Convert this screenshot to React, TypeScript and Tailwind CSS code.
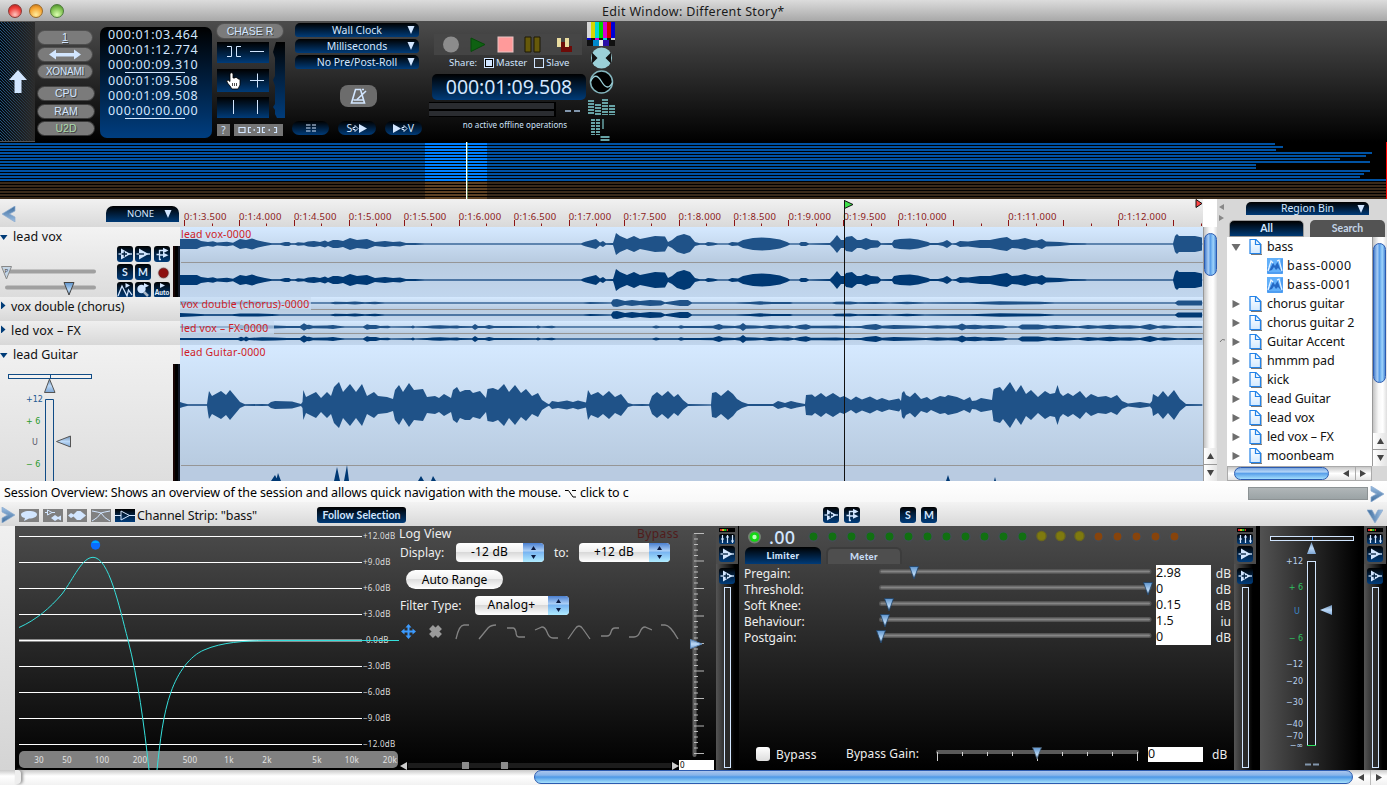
import React from "react";

type Pt = [number, number];

const VOX: Pt[] = [[180,5],[190,5],[197,5],[201,3],[208,2],[213,2.7],[217,1.5],[227,2.3],[233,1.3],[240,5],[246,4],[252,5.5],[258,3.5],[265,2],[272,.7],[280,.7],[285,2],[289,2],[291,.7],[295,.7],[298,1.7],[304,1.3],[308,2.5],[314,3],[320,2],[325,3.5],[328,2],[333,4],[338,4],[343,3],[350,6],[357,4],[367,5],[375,2],[385,3],[393,2],[400,2.5],[406,1],[415,1],[425,.5],[581,.5],[583,1.5],[586,2.5],[596,5],[600,1.5],[603,3],[606,.7],[613,1],[614,4],[616,11],[620,8],[627,5],[634,8],[640,5],[655,8],[665,7.5],[668,2],[672,4],[677,8],[684,10],[690,8],[695,2],[700,.7],[705,.7],[708,2],[713,1.5],[718,.5],[728,.5],[732,2],[738,1.5],[743,4],[753,6],[762,6.5],[770,6],[780,4.5],[787,2],[790,.5],[799,.5],[801,2],[806,2],[809,.5],[830,1],[833,4],[837,9],[841,4],[844,4],[846,7],[852,8],[857,4],[861,4],[866,6],[871,4],[878,3.5],[881,.8],[892,1],[894,4],[900,5],[910,5.5],[918,4.5],[928,2],[930,1],[938,1],[943,2],[947,4],[950,2],[952,.5],[956,1],[960,3],[968,2.5],[980,4],[990,4],[1000,6],[1007,7],[1012,4],[1018,4.5],[1025,6],[1032,4],[1037,3.5],[1042,5],[1046,2.5],[1060,2],[1070,1],[1085,.7],[1087,.5],[1173,.5],[1175,8],[1177,10],[1179,8],[1195,8],[1202,6.5]];

const DOUBLE: Pt[] = [[180,2],[192,1.5],[205,.8],[232,.8],[240,1.5],[258,1.5],[272,1],[280,.6],[330,.6],[335,1.3],[347,1],[355,1.6],[365,.8],[375,1.2],[385,.5],[583,.5],[590,1],[600,.7],[611,.5],[613,3.5],[617,4],[625,2],[632,3],[640,2],[650,3],[661,2.5],[665,.8],[670,1.5],[680,3],[688,3],[692,.5],[735,.5],[750,1],[760,1.7],[772,1],[790,1],[793,.5],[832,.5],[836,1.2],[850,1.5],[858,.8],[875,.9],[890,.6],[907,1.3],[925,.5],[955,.8],[970,.7],[985,1.2],[1000,1.8],[1040,1.2],[1055,.5],[1175,.5],[1178,2.6],[1202,2.4]];

const FX: Pt[] = [[180,1],[215,1],[238,1],[241,2.2],[244,1.2],[246,2.6],[249,1],[262,1.7],[275,1.5],[287,1],[300,1],[304,3.8],[307,2],[309,2.2],[313,1.3],[327,1.6],[333,2],[338,1.2],[345,.6],[363,.6],[367,2.8],[370,2],[376,2],[380,1.1],[388,1.2],[391,.5],[411,.7],[413,1.4],[415,.6],[427,1],[433,1.5],[440,1.7],[450,1.2],[457,1.5],[460,1],[472,.8],[475,3],[478,.9],[485,1],[489,2],[494,1],[536,.8],[538,1.5],[541,.5],[548,1],[552,1.2],[556,.5],[652,.5],[656,1.4],[660,.7],[678,.8],[681,1.7],[684,1],[700,1],[713,1.3],[719,3],[723,1.4],[735,1],[740,1.8],[743,4],[746,1.7],[755,1.4],[762,1],[770,1.9],[780,1.2],[788,1.8],[794,.7],[800,2],[806,2.8],[811,1.2],[820,1.3],[836,1.6],[852,.7],[861,1],[866,2],[876,3],[882,1.2],[894,2],[913,1.4],[926,1],[937,1.7],[948,1.3],[958,1.7],[962,3.5],[966,1.7],[975,2.2],[983,1.4],[991,2],[1003,1.6],[1008,.5],[1018,.6],[1022,2.5],[1038,2.4],[1048,1.2],[1056,2],[1070,1.3],[1078,.7],[1088,2.1],[1098,1.2],[1110,2.2],[1120,1.6],[1130,1.8],[1140,1],[1150,3],[1158,1.1],[1164,1.8],[1178,.8],[1190,1],[1202,.8]];

const GUITAR: Pt[] = [[180,3],[183,2],[188,.7],[207,.7],[208,8],[209,14],[212,9],[221,14],[226,10],[230,15],[235,9],[240,3],[245,.7],[262,1],[268,.7],[271,3],[275,4],[292,3.5],[301,1],[302.5,3],[303.3,15],[306,8],[316,13],[321,7],[327,13],[331,9],[334,18],[339,23],[343,13],[350,21],[356,13],[362,21],[367,9],[374,13],[378,9],[387,8],[393,6],[395,15],[399,20],[403,13],[409,22],[414,15],[423,16],[427,8],[435,9],[439,7],[444,11],[451,7],[453,15],[457,18],[460,13],[465,15],[470,15],[473,12],[480,14],[486,7],[487.5,16],[493,17],[498,15],[504,21],[509,13],[515,20],[521,12],[526,16],[532,9],[538,12],[542,5],[547,1.7],[549,.7],[552,4],[558,3],[567,4.5],[573,3],[578,4.5],[586,2.5],[588,15],[591,10],[598,13],[603,9],[609,14],[615,8],[621,11],[625,6],[628,2],[633,.7],[642,1],[649,.7],[652,9],[657,13],[662,9],[668,14],[674,8],[678,11],[683,5],[688,1],[711,.5],[712,12],[716,13],[721,9],[728,15],[733,11],[737,6],[742,3],[748,1],[773,1],[778,4],[785,2],[791,4],[797,2.5],[805,1],[806,10],[812,10.5],[815,8],[821,12],[826,8],[833,12],[840,7.5],[844,9],[851,5],[856,8.5],[862,5.5],[870,8.5],[877,5],[882,7],[889,4.5],[899,6.5],[901,4],[902,12],[904,14],[906,10],[910,8],[915,12.5],[921,6],[927,8],[931,5],[940,9],[945,8],[948,10],[957,8],[964,5],[970,8],[972,4],[976,4.5],[981,7],[992,5],[993.5,16],[1000,18],[1003,14],[1010,23],[1016,13],[1021,20],[1026,11],[1031,15],[1038,8],[1045,14],[1050,11],[1055,12],[1057.5,20],[1060,12],[1063,9],[1068,12],[1073,9],[1080,14],[1086,7],[1091,11],[1098,8],[1106,9],[1111,7],[1117,10],[1122,4],[1128,1.5],[1140,3],[1150,1.5],[1152,4],[1153,11],[1158,8],[1163,14],[1168,8],[1174,15],[1180,6],[1186,1],[1202,.7]];

const mirror = (pts: Pt[], cy: number) =>
  pts.map(([x, a]) => `${x - 180},${cy - a}`).join(" ") +
  " " +
  [...pts].reverse().map(([x, a]) => `${x - 180},${cy + a}`).join(" ");

/* ---------- shared bits ---------- */

function Defs() {
  return (
    <svg className="absolute h-0 w-0">
      <defs>
        <linearGradient id="thumb" x1="0" y1="0" x2="0" y2="1">
          <stop offset="0" stopColor="#5d93cc" /><stop offset="0.6" stopColor="#b9d8f6" /><stop offset="1" stopColor="#5b7fa8" />
        </linearGradient>
        <linearGradient id="thumbUp" x1="0" y1="0" x2="0" y2="1">
          <stop offset="0" stopColor="#6f90b5" /><stop offset="0.5" stopColor="#bcd9f7" /><stop offset="1" stopColor="#7ea6d4" />
        </linearGradient>
        <linearGradient id="chev" x1="0" y1="0" x2="0" y2="1">
          <stop offset="0" stopColor="#9ec0e4" /><stop offset="1" stopColor="#3d6c9c" />
        </linearGradient>
        <linearGradient id="page" x1="0" y1="0" x2="0" y2="1">
          <stop offset="0" stopColor="#ffffff" /><stop offset="1" stopColor="#d2e9ff" />
        </linearGradient>
        <linearGradient id="btn" x1="0" y1="0" x2="0" y2="1">
          <stop offset="0" stopColor="#000" /><stop offset="0.45" stopColor="#02203f" /><stop offset="1" stopColor="#003c7b" />
        </linearGradient>
      </defs>
    </svg>
  );
}

function Chevron({ dir }: { dir: "left" | "right" | "down" }) {
  const rot = dir === "left" ? "rotate(180 8 8)" : dir === "down" ? "rotate(90 8 8)" : "";
  return (
    <svg width="16" height="16" viewBox="0 0 16 16">
      <path transform={rot} d="M2 0L15 8L2 16V11L7.5 8L2 5Z" fill="url(#chev)" stroke="#8eacd0" strokeWidth="0.7" />
    </svg>
  );
}

type IconKind = "add" | "sub" | "route" | "S" | "M" | "wave" | "zoom" | "auto";
function BlueIcon({ kind }: { kind: IconKind }) {
  return (
    <svg width="16" height="16" viewBox="0 0 16 16">
      <rect width="16" height="16" rx="3" fill="url(#btn)" />
      {kind === "add" && (<g><path d="M1.5 8H15" stroke="#d2e6ff" strokeWidth="1.3" /><path d="M4 2.5L13.5 8L4 13.5Z" fill="#d2e6ff" /><path d="M4.7 8H10M7.3 5.5V10.8" stroke="#00203f" strokeWidth="1.3" /></g>)}
      {kind === "sub" && (<g><path d="M1.5 8H15" stroke="#d2e6ff" strokeWidth="1.3" /><path d="M4 2.5L13.5 8L4 13.5Z" fill="#d2e6ff" /><path d="M4 8H9" stroke="#00203f" strokeWidth="1.3" /></g>)}
      {kind === "route" && (<g stroke="#d2e6ff" fill="none"><path d="M2.5 8.5H6M5.5 14V4.500H10M5.500 9H10M5 13.500H7" strokeWidth="1.3" /><path d="M9 1.8L14.5 4.500L9 7.2ZM9 6.500L14.500 9.200L9 11.800Z" fill="#d2e6ff" stroke="none" /></g>)}
      {kind === "wave" && (<g><path d="M1 14L5 4L10 14L11.5 8L15 13" stroke="#d2e6ff" strokeWidth="1.3" fill="none" /><path d="M8.5 1L13 3.5L8.5 6Z" fill="#d2e6ff" /></g>)}
      {kind === "zoom" && (<g><circle cx="6.5" cy="7" r="4.2" fill="#d2e6ff" /><path d="M9 10L13 14" stroke="#aab8c8" strokeWidth="2.5" /><path d="M9 1L14 3.8L9 6Z" fill="#d2e6ff" /></g>)}
      {kind === "auto" && (<g><path d="M6 1L11 3.500L6 6Z" fill="#d2e6ff" /><text x="8" y="13" textAnchor="middle" className="fill-[#e6f1ff] font-['Lato'] text-[6.5px] font-black">Auto</text></g>)}
      {(kind === "S" || kind === "M") && (<text x="8" y="12" textAnchor="middle" className="fill-[#d2e6ff] font-['Lato'] text-[10.5px] font-bold">{kind}</text>)}
    </svg>
  );
}

function ScrollArrow({ dir }: { dir: "up" | "down" | "left" | "right" }) {
  const d = { up: "M3.5 0L7 6H0Z", down: "M0 0H7L3.5 6Z", left: "M6 0V7L0 3.5Z", right: "M0 0V7L6 3.5Z" }[dir];
  return <svg width="7" height="7"><path d={d} fill="#444" /></svg>;
}

function VScroll({ thumb, className = "" }: { thumb: string; className?: string }) {
  return (
    <div className={"flex flex-col border-l border-[#999] bg-[linear-gradient(90deg,#c4c4c4,#f8f8f8_40%,#fff_70%,#dedede)] " + className}>
      <div className={"mt-[6px] rounded-full border border-[#2c5bb0] bg-[linear-gradient(90deg,#4a82cf,#a8cdf5_30%,#5ba0ea_50%,#9fd4fb_75%,#4d8ad6)] " + thumb} />
      <div className="flex-1" />
      <div className="flex h-[17px] items-center justify-center border-b border-[#999] bg-[linear-gradient(90deg,#fff,#e4e4e4)]"><ScrollArrow dir="up" /></div>
      <div className="flex h-[16px] items-center justify-center bg-[linear-gradient(90deg,#fff,#e4e4e4)]"><ScrollArrow dir="down" /></div>
    </div>
  );
}

/* ---------- top panel ---------- */

function Pill({ children, className = "" }: { children?: React.ReactNode; className?: string }) {
  return (
    <div className={"flex items-center justify-center rounded-full bg-[#7b7b7b] font-['Liberation_Sans'] text-[11px] leading-none text-[#d2e6ff] [text-shadow:1px_1px_0_#444] ring-1 ring-[#5a5a5a]/60 " + className}>
      {children}
    </div>
  );
}

const NAVY = "bg-[linear-gradient(#000,#003b78)]";

function NavyMenu({ label, className = "" }: { label: string; className?: string }) {
  return (
    <div className={`flex items-center rounded-b-[3px] rounded-t-[5px] ${NAVY} text-[10.5px] leading-none text-[#d2e6ff] ${className}`}>
      <span className="flex-1 pl-[12px] text-center">{label}</span>
      <svg width="8" height="8" className="mr-[4px]"><path d="M0.5 0H7.5L4 8Z" fill="#d2e6ff" /></svg>
    </div>
  );
}

const TIMES = ["000:01:03.464", "000:01:12.774", "000:00:09.310", "000:01:09.508", "000:01:09.508", "000:00:00.000"];

function TopPanel() {
  return (
    <div className="flex h-[121px] shrink-0 bg-[linear-gradient(#4c4c4c,#000)]">
      <div className="flex w-[35px] items-center justify-center border-y border-[#555] bg-[linear-gradient(90deg,transparent,#2b2b2b),repeating-linear-gradient(45deg,#245680_0_0.7px,#020a12_0.700px_2.120px)]">
        <svg width="18" height="23"><path d="M9 0L18 10H12.5V23H5.5V10H0Z" fill="#d2e6ff" /></svg>
      </div>
      <div className="ml-[3px] flex w-[57px] flex-col pt-[10px]">
        <Pill className="h-[13px] w-[54px] underline">1</Pill>
        <Pill className="mt-[4px] h-[13px] w-[54px]">
          <svg width="32" height="11"><path d="M0 5.5L7 0.5V4H25V0.5L32 5.5L25 10.5V7.5H7V10.5Z" fill="#d2e6ff" /></svg>
        </Pill>
        <Pill className="mt-[4px] h-[13px] w-[54px] text-[10px]! tracking-[-0.2px]">XONAMI</Pill>
        <Pill className="mt-[9px] h-[13px] w-[56px] text-[10.5px]!">CPU</Pill>
        <Pill className="mt-[5px] h-[13px] w-[56px] text-[10.5px]!">RAM</Pill>
        <Pill className="mt-[4px] h-[13px] w-[56px] text-[10.5px]! text-[#a9d9a9]!">U2D</Pill>
      </div>
      <div className="ml-[5px] mt-[6px] flex h-[111px] w-[112px] flex-col rounded-[7px] bg-[linear-gradient(#000,#003e80)] pl-[8px] pt-px text-[12.5px] tracking-[0.68px] text-[#d2e6ff]">
        {TIMES.map((t, i) => (
          <div key={i} className={"flex h-[15px] shrink-0 items-center leading-none " + (i === 3 ? "mt-px" : "")}>
            {i % 3 === 2 ? (
              <span className="relative">{t}<i className="absolute -bottom-[1px] left-[17px] h-px w-[60px] bg-[#d2e6ff]" /></span>
            ) : t}
          </div>
        ))}
      </div>
      <div className="ml-[5px] mt-[3px] w-[72px]">
        <Pill className="h-[14px] w-[66px] text-[10.5px]!">CHASE R</Pill>
        <div className="flex">
          <div className="w-[52px]">
            <div className={`mt-[4px] flex h-[21px] items-center ${NAVY}`}>
              <svg width="52" height="21" stroke="#d2e6ff" fill="none"><path d="M10 4.5H14.500V14.500H10M24 4.500H19.500V14.500H24M33 9.500H47" /></svg>
            </div>
            <div className={`mt-[6px] h-[23px] ${NAVY}`}>
              <svg width="52" height="24"><path d="M33 11.500H47M40.500 4.500V18.500" stroke="#d2e6ff" /><path d="M13 4.500Q14.500 3 16 4.500V9H18V8.500Q21 8 21 10Q23 9.500 23 11V16L21 20H15L13 17Q10 14 9.500 11.500Q11.500 10.500 13 12.500Z" fill="#fff" stroke="#000" strokeWidth="0.8" /><path d="M15.500 14V17M17.500 14V17M19.500 14V17" stroke="#222" strokeWidth="0.8" /></svg>
            </div>
            <div className={`mt-[5px] h-[21px] ${NAVY}`}>
              <svg width="52" height="21"><path d="M16.500 3V17M40.500 3V17" stroke="#d2e6ff" /></svg>
            </div>
          </div>
          <svg className="ml-[4px] mt-[4px]" width="12" height="76"><path d="M3 0H12V76H4L2 72V68L0 65L2 62V44L0 38L2 34V16L0 10Z" fill="url(#btn)" /></svg>
        </div>
        <div className="mt-[6px] flex h-[12px] gap-[4px] text-[10px] leading-none text-[#d2e6ff]">
          <div className="flex w-[13px] items-center justify-center bg-[#757575]">?</div>
          <div className="flex w-[49px] items-center justify-center bg-[#757575]">
            <svg width="42" height="8" fill="none" stroke="#d2e6ff" strokeWidth="1.2"><path d="M1 1.500H7V6.500H1ZM13 1.500H10.500V6.500H13M19 1.500H21.500V6.500H19M27 1.500H24.500V6.500H27M36 1.500H38.500V6.500H36" /><path d="M15.500 4H17M30.500 4H32" strokeWidth="1.500" /></svg>
          </div>
        </div>
      </div>
      <div className="ml-[2px] mt-[2px] flex w-[132px] flex-col">
        <NavyMenu label="Wall Clock" className="ml-[4px] h-[14px] w-[124px]" />
        <NavyMenu label="Milliseconds" className="ml-[4px] mt-[2px] h-[14px] w-[124px]" />
        <NavyMenu label="No Pre/Post-Roll" className="ml-[4px] mt-[2px] h-[14px] w-[124px]" />
        <div className="ml-[49px] mt-[16px] flex h-[22px] w-[37px] items-center justify-center rounded-[8px] bg-[#6c6c6c]">
          <svg width="18" height="17" fill="none" stroke="#d2e6ff" strokeWidth="1.600"><path d="M5.500 1.500H10.500L14.500 15H1.500ZM3.500 12H13M7 11.500L16 3" /><path d="M12 1.500H14" /></svg>
        </div>
        <div className="ml-px mt-[14px] flex gap-[9px] text-[10.500px] leading-none text-[#d2e6ff]">
          <div className={`flex h-[14px] w-[37px] items-center justify-center rounded-full ${NAVY}`}>
            <svg width="10" height="8" stroke="#d2e6ff" strokeWidth="1.200"><path d="M0 1H4.500M0 4H4.500M0 7H4.500M6 1H10.500M6 4H10.500M6 7H10.500" /></svg>
          </div>
          <div className={`flex h-[14px] w-[38px] items-center justify-center rounded-full ${NAVY}`}>
            S<svg width="15" height="9"><path d="M1 3.500H3V1.500L6 4.500L3 7.500V5.500H1Z" fill="none" stroke="#d2e6ff" /><path d="M7 0L15 4.500L7 9Z" fill="#d2e6ff" /></svg>
          </div>
          <div className={`flex h-[14px] w-[37px] items-center justify-center rounded-full ${NAVY}`}>
            <svg width="15" height="9"><path d="M9 3.500H11V1.500L14 4.500L11 7.500V5.500H9Z" fill="none" stroke="#d2e6ff" /><path d="M0 0L8 4.500L0 9Z" fill="#d2e6ff" /></svg>V
          </div>
        </div>
      </div>
      <div className="ml-[6px] mt-[13px] w-[158px]">
        <svg className="ml-[5px] block" width="148" height="21">
          <rect width="148" height="21" fill="#474747" opacity="0.800" />
          <circle cx="17" cy="10.500" r="8" fill="#8c8c8c" />
          <path d="M37 4L51 10.500L37 17.500Z" fill="#0f6112" stroke="#074a0a" />
          <rect x="64" y="3" width="15" height="15" fill="#ff9a9a" stroke="#e9c4c4" />
          <path d="M91 3H97V18H91ZM100 3H106V18H100Z" fill="#66590a" stroke="#1c1804" />
          <path d="M127 8H134V18H127ZM132 12H138V18H132Z" fill="#6d0b08" />
          <path d="M123 4H127V13H123ZM131 4H135V13H131Z" fill="#e9dca0" />
        </svg>
        <div className="flex h-[16px] items-center pl-[20px] text-[9.500px] leading-none text-[#d2e6ff]">
          Share:
          <i className="ml-[7px] mr-[2px] flex h-[10px] w-[10px] items-center justify-center border border-[#d2e6ff] bg-black"><i className="h-[6px] w-[6px] bg-[#d2e6ff]" /></i>Master
          <i className="ml-[7px] mr-[2px] h-[10px] w-[10px] border border-[#d2e6ff]" />Slave
        </div>
        <div className={`ml-[3px] mt-[3px] flex h-[26px] w-[154px] items-center justify-center rounded-[5px] ${NAVY} text-[19.500px] leading-none tracking-[-0.070px] text-[#d2e6ff]`}>000:01:09.508</div>
        <div className="mt-[2px] flex h-[15px] items-center">
          <div className="flex h-[15px] w-[127px] flex-col gap-[2px] border-y border-black bg-black pr-[2px]"><i className="flex-1 bg-[#2a2c30]" /><i className="flex-1 bg-[#2a2c30]" /></div>
          <i className="ml-[9px] mt-[3px] h-[2px] w-[6px] bg-[#8296ac]" /><i className="ml-[3px] mt-[3px] h-[2px] w-[6px] bg-[#8296ac]" />
        </div>
        <div className="mt-[4px] whitespace-nowrap pl-[14px] text-center text-[8px] leading-none tracking-[0.080px] text-[#cfe3fb]">no active offline operations</div>
      </div>
      <svg className="block" width="30" height="121">
        {["#d6d6d6", "#d6d600", "#00d6d6", "#00d600", "#d600d6", "#d60000", "#0000d6"].map((c, i) => (
          <rect key={c} x={i * 4} y="1" width="4" height="16" fill={c} />
        ))}
        {["#0000d6", "#111", "#d600d6", "#111", "#00d6d6", "#111", "#ccc"].map((c, i) => (
          <rect key={i} x={i * 4} y="17" width="4" height="2" fill={c} />
        ))}
        <path d="M0 19H6V25H0Z M22 19H28V25H22Z" fill="#111" /><path d="M6 19H12V25H6Z" fill="#08c" /><path d="M12 19H16V25H12Z" fill="#eee" /><path d="M16 19H22V25H16Z" fill="#2a10a8" />
        <circle cx="14.500" cy="37" r="10.500" fill="#9bd0d8" /><path d="M5 31.500L10.500 37L5 42.500ZM24 31.500L18.500 37L24 42.500Z" fill="#111" />
        <circle cx="14.500" cy="61" r="11" fill="#000" stroke="#84b5bd" strokeWidth="1.500" /><path d="M3.500 60.500Q8.500 50 14.500 60.500T25.500 61.500" fill="none" stroke="#9bd0d8" strokeWidth="1.300" />
        <path d="M4 79V94M11 83V94M18 78V94M25 84V94" stroke="#67a3a6" strokeWidth="6" strokeDasharray="2 1" />
        <path d="M6 98V114M11 98V114" stroke="#67a3a6" strokeWidth="4" strokeDasharray="2 1" /><path d="M16 98V108" stroke="#67a3a6" strokeWidth="1.500" /><path d="M18 115V120" stroke="#67a3a6" strokeWidth="9" strokeDasharray="2 1" />
      </svg>
    </div>
  );
}

/* ---------- overview ---------- */

const ROW_ENDS = [1275, 1283, 1276, 1372, 1366, 1340, 1370, 1256, 1256, 1370, 1364, 1360, 1386];

function Overview() {
  return (
    <svg className="block shrink-0 bg-black" width="1387" height="57">
      {Array.from({ length: 19 }, (_, i) => {
        const blue = i < 13;
        const end = blue ? ROW_ENDS[i] : 1386;
        return (
          <g key={i}>
            <rect x="0" y={1 + i * 3} width={end} height="2" fill={blue ? "#0052a3" : "#3a2a1a"} />
            <rect x="425" y={1 + i * 3} width="62" height="2" fill={blue ? "#0080ff" : "#5f4224"} />
          </g>
        );
      })}
      <rect x="466" y="0" width="1" height="57" fill="#fff" /><rect x="467" y="0" width="1" height="57" fill="#8fe08f" opacity="0.500" />
      <rect x="1386" width="1" height="57" fill="#f00" />
    </svg>
  );
}

/* ---------- track controls ---------- */

function Fold({ open }: { open: boolean }) {
  return (
    <svg width="8" height="8" className="shrink-0">
      <path d={open ? "M0 1H7.5L3.700 6Z" : "M1 0.500L5.500 4.500L1 8.500Z"} fill="#003c78" />
    </svg>
  );
}

function TrackControls() {
  return (
    <div className="flex w-[180px] flex-col text-[12.5px] leading-none text-[#111]">
      <div className="flex h-[28px] items-start bg-[linear-gradient(#f1f1f1,#d9d9d9)] pl-px pt-[7px]">
        <Chevron dir="left" />
        <div className="ml-[89px] flex h-[16px] w-[73px] items-center rounded-t-[7px] bg-[linear-gradient(#000,#003a75)] text-[9.5px] text-[#d2e6ff]">
          <span className="flex-1 pl-[11px] text-center">NONE</span>
          <svg width="8" height="8" className="mr-[7px]"><path d="M0.500 0H7.500L4 8Z" fill="#d2e6ff" /></svg>
        </div>
      </div>
      <div className="flex h-[70px] bg-[linear-gradient(#f3f3f3,#dcdcdc)]">
        <div className="w-[117px] pt-[4px]">
          <div className="flex h-[13px] items-center whitespace-nowrap"><Fold open /><span className="ml-[5px] tracking-[0.1px]">lead vox</span></div>
          <svg className="block" width="117" height="53">
            <path d="M7 27.500H94M7 43.500H94" stroke="#a0a0a0" strokeWidth="4" strokeLinecap="round" />
            <path d="M1.500 22.500H11.500L6.500 35Z" fill="#c5d5e4" stroke="#888" /><text x="4.500" y="29" className="fill-[#444] text-[6px]">P</text>
            <path d="M64 38.500H74L69 51Z" fill="url(#thumb)" stroke="#444" />
          </svg>
        </div>
        <div className="grid h-[51px] w-[56px] grid-cols-[18px_19px_16px] content-start gap-y-[2px] pt-[19px]">
          <BlueIcon kind="add" /><BlueIcon kind="sub" /><BlueIcon kind="route" />
          <BlueIcon kind="S" /><BlueIcon kind="M" />
          <svg width="17" height="16"><circle cx="9.500" cy="9" r="6" fill="#c9c0c0" /><circle cx="9.500" cy="9" r="4.800" fill="#8e1010" stroke="#5a2020" strokeWidth="0.600" /></svg>
          <BlueIcon kind="wave" /><BlueIcon kind="zoom" /><BlueIcon kind="auto" />
        </div>
        <i className="mt-[19px] w-[7px] border-r-2 border-[#111827] bg-black shadow-[inset_2px_0_0_#180505]" />
      </div>
      <div className="flex h-[24px] items-start bg-[linear-gradient(#efefef,#d8d8d8)] pt-[4px]"><Fold open={false} /><span className="ml-[3px] tracking-[-0.1px]">vox double (chorus)</span></div>
      <div className="flex h-[24px] items-start bg-[linear-gradient(#efefef,#d8d8d8)] pt-[4px]"><Fold open={false} /><span className="ml-[3px] tracking-[0.15px]">led vox – FX</span></div>
      <div className="flex h-[136px] bg-[linear-gradient(#f1f1f1,#dedede)]">
        <div className="flex-1 pt-[4px]">
          <div className="flex h-[13px] items-center"><Fold open /><span className="ml-[5px]">lead Guitar</span></div>
          <svg className="block font-['DejaVu_Sans'] text-[8px]" width="173" height="119">
            <rect x="8.500" y="12.500" width="83" height="4" fill="#f2f2f2" stroke="#114c86" /><path d="M50.500 12V17" stroke="#114c86" />
            <path d="M49.500 17L55 30.500H44.500Z" fill="url(#thumbUp)" stroke="#555" />
            <path d="M45.500 119V37.500H53.500V119" fill="none" stroke="#114c86" />
            <path d="M56.500 79.500L70.500 74V85Z" fill="url(#thumbUp)" stroke="#555" />
            <text x="26" y="40" fill="#1f5a92">+12</text><text x="26" y="62" fill="#2a9a2a">+ 6</text><text x="32" y="83" fill="#556">U</text><text x="26" y="105" fill="#2a9a2a">− 6</text>
          </svg>
        </div>
        <i className="mt-[19px] w-[7px] border-r-2 border-[#111827] bg-black shadow-[inset_2px_0_0_#180505]" />
      </div>
    </div>
  );
}

/* ---------- arrangement ---------- */

function Lane({ h, center, mid, pts, title, labelW, solo }: { h: string; center: number[]; mid: number; pts: Pt[]; title: string; labelW: number; solo?: boolean }) {
  return (
    <div className={"relative " + h}>
      <div className="absolute inset-x-0 top-0 bg-[linear-gradient(#d5e9ff,#b8cbe0)]" style={{ height: mid }} />
      <div className={"absolute inset-x-0 bottom-0 " + (solo ? "bg-[#b9cbe1]" : "bg-[linear-gradient(#b9cce0,#c1d6ee)]")} style={{ top: mid }} />
      <svg className="absolute inset-0 h-full w-full">
        <path d={`M${mid < 20 ? labelW : 1} ${mid + 0.500}H1023`} stroke="#969696" />
        {center.map((c, i) => (
          <g key={c}>
            <path d={`M0 ${c}H1023`} stroke="#8fabcd" strokeWidth="1.300" />
            <polygon points={mirror(pts, c)} fill={i === 0 ? "#1f5288" : "#003974"} />
          </g>
        ))}
        {mid < 20 && <rect width={labelW} height={mid} fill="#c8dbf1" opacity="0.700" />}
        {solo && <path d="M91 136L95 130L98 136ZM154 136L157 122L160 136ZM164 136L167 120L169 136ZM96 136L98 128L101 136ZM238 136L241 131L244 136ZM251 136L253 131L256 136ZM766 136L768 130L770 136ZM814 136L815 132L816 136Z" fill="#003974" />}
      </svg>
      <span className="absolute left-px top-[2px] whitespace-nowrap text-[10.500px] leading-[11px] tracking-[0.170px] text-[#cf1c26]">{title}</span>
    </div>
  );
}

const RULER = ["0:1:3.500", "0:1:4.000", "0:1:4.500", "0:1:5.000", "0:1:5.500", "0:1:6.000", "0:1:6.500", "0:1:7.000", "0:1:7.500", "0:1:8.000", "0:1:8.500", "0:1:9.000", "0:1:9.500", "0:1:10.000", "", "0:1:11.000", "", "0:1:12.000", ""];

function Arrangement() {
  return (
    <div className="relative w-[1023px]">
      <svg className="block bg-[linear-gradient(#f1f1f1,#d9d9d9)] text-[9.500px] tracking-[0.280px]" width="1023" height="28">
        {RULER.map((t, i) => (
          <g key={i}>
            <path d={`M${Math.round(4 + i * 54.95) + 0.500} 21V27M${Math.round(31.500 + i * 54.950) + 0.500} 24.500V27`} stroke="#8c1414" />
            <text x={4 + i * 54.95} y="21" fill="#8c1a1a">{t}</text>
          </g>
        ))}
        <path d="M1016 0.500V8.500L1022 4.500Z" fill="#f44" stroke="#111" />
      </svg>
      <Lane h="h-[70px]" center={[17, 53]} mid={35} pts={VOX} title="lead vox-0000" labelW={74} />
      <Lane h="h-[24px]" center={[6, 18]} mid={12} pts={DOUBLE} title="vox double (chorus)-0000" labelW={131} />
      <Lane h="h-[24px]" center={[6, 18]} mid={12} pts={FX} title="led vox – FX-0000" labelW={94} />
      <Lane h="h-[136px]" center={[60]} mid={120} pts={GUITAR} title="lead Guitar-0000" labelW={86} solo />
      <svg className="absolute left-[664px] top-0" width="12" height="282">
        <path d="M0.500 1V282" stroke="#111" /><path d="M0.500 1.500V9.500L9 5.500Z" fill="#3fe04a" stroke="#111" />
      </svg>
    </div>
  );
}

/* ---------- region bin ---------- */

const FILES = ["bass", "-bass-0000", "-bass-0001", "chorus guitar", "chorus guitar 2", "Guitar Accent", "hmmm pad", "kick", "lead Guitar", "lead vox", "led vox – FX", "moonbeam"];

function RegionBin() {
  return (
    <div className="flex w-[170px] bg-[#d7d7d7]">
      <div className="w-[10px] pt-[2px]">
        <svg width="10" height="142"><path d="M7 3V9L2 6ZM2 14V20L7 17Z" fill="#888" /><path d="M3 141Q5 137 8 139" stroke="#777" fill="none" /></svg>
      </div>
      <div className="flex w-[160px] flex-col">
        <NavyMenu label="Region Bin" className="ml-[19px] mt-[3px] h-[13px] w-[123px] rounded-b-none" />
        <div className="mt-[5px] flex gap-[6px] pl-[2px] font-['Lato'] text-[10.5px] font-bold leading-none">
          <div className="flex h-[17px] w-[75px] items-center justify-center rounded-t-[5px] border border-[#999] bg-[linear-gradient(#000,#003a75)] text-[#d2e6ff]">All</div>
          <div className="flex h-[17px] w-[75px] items-center justify-center rounded-t-[5px] bg-[#535353] text-[#c3d3e6]">Search</div>
        </div>
        <div className="flex h-[229px]">
          <div className="w-[145px] overflow-hidden bg-white text-[12.5px] leading-none text-[#111]">
            {FILES.map((f, i) => {
              const child = f[0] === "-";
              return (
                <div key={f} className={"flex h-[19px] items-center whitespace-nowrap " + (child ? "pl-[40px]" : "pl-[4px]")}>
                  {child ? (
                    <svg width="16" height="16"><rect width="16" height="16" fill="#62b0fa" /><path d="M1 15V9M15 15V1M1 15H15" stroke="#3c8be8" /><path d="M2 13L6 5L8 8L10.500 4L14 13L11 10L9 12L7 9L5 12Z" fill="#2468c4" /><path d="M1 13L4 3L6 5M10 3L12 2L15 13" stroke="#e8f4ff" fill="none" strokeWidth="1.200" /></svg>
                  ) : (
                    <>
                      <svg width="10" height="10"><path d={i === 0 ? "M0.500 2H9.500L5 9Z" : "M1.500 1V9L9 5Z"} fill="#6e6e6e" /></svg>
                      <svg className="ml-[8px]" width="13" height="17"><path d="M13 6V16.500H2" stroke="#777" fill="none" /><path d="M1 1.500H7L11.500 6V15.500H1Z" fill="url(#page)" stroke="#2383e8" strokeWidth="1.200" /><path d="M6.500 1.500V6.500H11.500" fill="none" stroke="#2383e8" strokeWidth="1.200" /></svg>
                    </>
                  )}
                  <span className={child ? "ml-[4px] pt-[2px] tracking-[0.620px]" : "ml-[5px] pt-[2px] tracking-[-0.120px]"}>{f.replace(/^-/, "")}</span>
                </div>
              );
            })}
          </div>
          <VScroll thumb="h-[140px] w-[13px] shrink-0" className="w-[15px]" />
        </div>
        <div className="flex h-[15px] w-[145px] border border-[#aaa] bg-[linear-gradient(#c6c6c6,#fff_50%,#e4e4e4)]">
          <i className="ml-[6px] h-[13px] w-[95px] rounded-full border border-[#2c5bb0] bg-[linear-gradient(#7aa6de,#b2d4f7_35%,#5aa0ea_50%,#a3defc)]" />
          <span className="ml-auto flex w-[18px] items-center justify-center"><ScrollArrow dir="left" /></span>
          <span className="flex w-[16px] items-center justify-center border-l border-[#aaa]"><ScrollArrow dir="right" /></span>
        </div>
      </div>
    </div>
  );
}

/* ---------- status + strip toolbar ---------- */

function StatusBar() {
  return (
    <div className="flex h-[21px] shrink-0 items-center bg-[linear-gradient(#fff,#f8f8f8)] text-[12.5px] leading-none text-black">
      <div className="ml-[4px] mt-[3px] flex w-[640px] items-center whitespace-nowrap tracking-[-0.110px]">
        <span>Session Overview: Shows an overview of the session and allows quick navigation with the mouse.</span>
        <svg className="mx-[4px]" width="11" height="9" stroke="#000" fill="none"><path d="M0 1.500H3.500L8 8H11M7 1.500H11" /></svg>
        <span>click to c</span>
      </div>
      <div className="ml-auto mt-[3px] h-[13px] w-[120px] border border-[#8c9294] bg-[linear-gradient(#b0b6b8,#9ba3a5)]" />
      <div className="ml-px mr-[2px] mt-[4px]"><Chevron dir="right" /></div>
    </div>
  );
}

function ToolIcon({ n }: { n: number }) {
  const on = n === 4;
  return (
    <svg width="20" height="13" className="mr-[4px] shrink-0">
      <rect width="20" height="13" fill={on ? "url(#btn)" : "#808080"} />
      {n === 0 && <path d="M10 2C15 2 18 3.500 18 5.500S15 9.500 10 9.500L5 12L6 9C3 8.500 2 7 2 5.500S5 2 10 2Z" fill="#d2e6ff" />}
      {n === 1 && <g fill="#d2e6ff"><path d="M4.500 1L9 3.500L4.500 6Z" fill="none" stroke="#d2e6ff" /><path d="M2 3H4.500V4H2ZM9 3H12V4H9Z" /><path d="M8 9L12 6L15 8L18 6.500V11.500L15 10L12 12Z" /></g>}
      {n === 2 && <path d="M1 6.500L4 4L6.500 5.500L10 2H13.500L19 6.500L13.500 11H10L6.500 7.500L4 9Z" fill="#d2e6ff" />}
      {n === 3 && <path d="M1 12Q7 9 10 4Q13 9 19 12M1 2Q7 3 10 4Q13 3 19 2" stroke="#d2e6ff" fill="none" />}
      {n === 4 && <path d="M0 6.500H6M14 6.500H20M6 2V11L14.500 6.500Z" stroke="#d2e6ff" fill="none" />}
    </svg>
  );
}

function StripToolbar() {
  return (
    <div className="flex h-[24px] shrink-0 items-center bg-[linear-gradient(#f3f3f3,#d8d8d8)] text-[12.5px] leading-none text-[#111]">
      <div className="mt-[2px]"><Chevron dir="right" /></div>
      <div className="ml-[3px] mt-[2px] flex">{[0, 1, 2, 3, 4].map((n) => <ToolIcon key={n} n={n} />)}</div>
      <span className="-ml-[2px] mt-[4px] w-[180px] tracking-[-0.120px]">Channel Strip: "bass"</span>
      <div className={`mt-[2px] flex h-[16px] w-[89px] items-center justify-center rounded-[3px] ${NAVY} font-['Lato'] text-[10.5px] font-bold tracking-[0.1px] text-[#d2e6ff]`}>Follow Selection</div>
      <div className="ml-[417px] mt-[2px] flex w-[400px] gap-[5px]">
        <BlueIcon kind="add" /><BlueIcon kind="route" />
        <div className="ml-[35px] flex gap-[5px]"><BlueIcon kind="S" /><BlueIcon kind="M" /></div>
      </div>
      <div className="ml-auto mr-[4px] mt-[3px]"><Chevron dir="down" /></div>
    </div>
  );
}

/* ---------- equaliser ---------- */

const DB = ["+12.0dB", "+9.0dB", "+6.0dB", "+3.0dB", " 0.0dB", "−3.0dB", "−6.0dB", "−9.0dB", "−12.0dB"];
const HZ: [number, string][] = [[39, "30"], [67, "50"], [102, "100"], [140, "200"], [190, "500"], [229, "1k"], [267, "2k"], [317, "5k"], [352, "10k"], [390, "20k"]];

function Equaliser() {
  return (
    <svg className="block shrink-0 text-[8px] tracking-[0.280px]" width="384" height="244" viewBox="15 526 384 244">
      {DB.map((t, i) => (
        <g key={t}>
          {i === 4 && <rect x="19" y="639" width="343" height="3" fill="#8a8a8a" />}
          <path d={`M19 ${536.500 + i * 26}H362`} stroke="#fff" />
          <text x={i === 4 ? 366 : 363} y={539 + i * 26} fill="#dcdcdc">{t.trim()}</text>
        </g>
      ))}
      <rect x="19" y="751" width="379" height="17" rx="5" fill="#808080" />
      {HZ.map(([x, t]) => <text key={t} x={x} y="763" textAnchor="middle" fill="#e4e4e4">{t}</text>)}
      <path d="M19 627.500C36 620 50 608 62 594C74 578 82 557.500 93 557.300C109 557.500 119 606 128 640C138 679 144 724 149 770" fill="none" stroke="#35e0dc" />
      <path d="M157 770C160 742 163 714 171 692C178 672 190 656 204 650C222 642 245 641 265 640.500H399" fill="none" stroke="#35e0dc" />
      <circle cx="95.500" cy="545" r="4.700" fill="#0a6cff" /><path d="M91.500 543A4.700 4.700 0 0 1 99.500 543Z" fill="#00aaff" />
    </svg>
  );
}

function Select({ text, className = "" }: { text: string; className?: string }) {
  return (
    <div className={"flex h-[19px] overflow-hidden rounded-[4px] bg-[linear-gradient(#fff,#f0f0f0_45%,#d9d9d9_50%,#fff)] text-[12px] leading-none text-black " + className}>
      <span className="flex flex-1 items-center justify-center tracking-[0.200px]">{text}</span>
      <span className="flex w-[21px] items-center justify-center bg-[linear-gradient(#4a7fd0,#a9cdf5_40%,#7ab6f2_50%,#b0ecff)]">
        <svg width="5" height="13"><path d="M0 4L2.500 0L5 4ZM0 9L2.500 13L5 9Z" fill="#0a1a40" /></svg>
      </span>
    </div>
  );
}

const SHAPES = [
  "M1 15Q4 1 9 1H14", "M1 15L10 4Q13 1 18 1", "M1 4H7Q9 4 10 8Q10 13 13 13H19", "M1 6L8 3Q11 3 13 8Q15 14 19 14H24",
  "M1 15L8 5Q12 -1 16 5L23 15", "M1 12H7Q10 12 11 8Q12 4 15 4H19", "M1 13H6Q10 13 12 8Q14 3 17 3L24 6", "M1 1H5Q10 1 18 15",
];
const SHAPE_GAP = ["ml-[12px] w-[15px]", "ml-[8px] w-[19px]", "ml-[9px] w-[19px]", "ml-[9px] w-[24px]", "ml-[9px] w-[24px]", "ml-[9px] w-[20px]", "ml-[8px] w-[24px]", "ml-[8px] w-[19px]"];

function Filter() {
  return (
    <div className="flex w-[317px] shrink-0 text-[12px] leading-none text-[#eee]">
      <div className="flex w-[286px] flex-col">
        <div className="flex justify-between pt-[2px] text-[12.500px]"><span>Log View</span><span className="pr-[6px] text-[12px] tracking-[0.400px] text-[#511c1c]">Bypass</span></div>
        <div className="mt-[2px] flex items-center pl-px">
          <span className="w-[56px] pt-[2px]">Display:</span><Select text="-12 dB" className="w-[88px]" />
          <span className="ml-[10px] w-[25px] pt-[2px]">to:</span><Select text="+12 dB" className="w-[91px]" />
        </div>
        <div className="ml-[7px] mt-[8px] flex h-[19px] w-[97px] items-center justify-center rounded-full bg-[linear-gradient(#fff,#f0f0f0_45%,#dedede_50%,#fff)] pt-px text-black">Auto Range</div>
        <div className="mt-[7px] flex items-center pl-px"><span className="w-[75px] pt-[2px]">Filter Type:</span><Select text="Analog+" className="w-[94px]" /></div>
        <div className="mt-[8px] flex h-[18px] items-center pl-[2px]">
          <svg width="15" height="15"><path d="M7.500 0L10.500 3.500H8.500V6.500H11.500V4.500L15 7.500L11.500 10.500V8.500H8.500V11.500H10.500L7.500 15L4.500 11.500H6.500V8.500H3.500V10.500L0 7.500L3.500 4.500V6.500H6.500V3.500H4.500Z" fill="#3c9bff" /></svg>
          <svg className="ml-[12px]" width="15" height="15"><path d="M3 3L12 12M12 3L3 12" stroke="#9a9a9a" strokeWidth="5.500" /></svg>
          {SHAPES.map((d, i) => (
            <svg key={i} className={"h-[16px] shrink-0 " + SHAPE_GAP[i]} fill="none" stroke="#838383" strokeWidth="1.300"><path d={d} /></svg>
          ))}
        </div>
        <div className="mt-auto flex h-[10px] items-center">
          <svg width="280" height="10"><path d="M1 6L8 2V10ZM280 6L273 2V10Z" fill="#ccc" /><path d="M9 5.500H272" stroke="#1c1c1c" strokeWidth="5" /><path d="M63 2H70V9H63ZM102 2H109V9H102Z" fill="#8b8b8b" /></svg>
        </div>
      </div>
      <div className="flex w-[31px] flex-col">
        <svg className="block" width="31" height="233">
          <path d="M9.500 9V229" stroke="#5f5f5f" strokeWidth="4" strokeLinecap="round" />
          {Array.from({ length: 41 }, (_, i) => (
            <path key={i} d={`M9 ${7.500 + i * 5.500}H${i % 5 === 0 ? 19 : 13}`} stroke="#c8c8c8" strokeWidth="0.900" />
          ))}
          <path d="M5.500 113.500V122.500L17 118Z" fill="url(#thumbUp)" stroke="#5d89bb" />
        </svg>
        <div className="-ml-[6px] mt-[1px] h-[10px] w-[35px] bg-white pl-px text-[8px] leading-[10px] text-black">0</div>
      </div>
    </div>
  );
}

function MeterStrip({ className = "" }: { className?: string }) {
  return (
    <div className={"flex shrink-0 flex-col items-center border-r border-black " + className}>
      <div className="flex h-[38px] w-full flex-col items-center bg-[#4b4b4b]">
        <svg width="16" height="16" className="mt-[2px] block">
          <rect width="16" height="4" fill="#000" /><path d="M1 2H3M8 2H9" stroke="#d22" strokeWidth="2" /><path d="M3 2H5" stroke="#da2" strokeWidth="2" /><path d="M5 2H7.500" stroke="#2b2" strokeWidth="2" />
          <rect y="6" width="16" height="10" rx="2" fill="url(#btn)" />
          <path d="M3.500 7V15M8.500 7V15M13.500 7V15M2 11H5M7 9H10M12 13H15" stroke="#d2e6ff" strokeWidth="1.200" />
        </svg>
        <div className="mt-[2px] h-[16px]"><BlueIcon kind="sub" /></div>
      </div>
      <div className="flex w-full flex-1 flex-col items-center bg-[linear-gradient(90deg,#555,#000_85%)]">
        <div className="mt-[4px] h-[16px]"><BlueIcon kind="add" /></div>
        <div className="mb-[2px] mt-[3px] w-[7px] flex-1 border border-[#d2e6ff] bg-[#2a2a2a]" />
      </div>
    </div>
  );
}

/* ---------- limiter ---------- */

const PARAMS: [string, number, string, string][] = [
  ["Pregain:", 29, "2.98", "dB"], ["Threshold:", 263, "0", "dB"], ["Soft Knee:", 4, "0.15", "dB"], ["Behaviour:", 0, "1.5", "iu"], ["Postgain:", -4, "0", "dB"],
];

function Limiter() {
  return (
    <div className="flex w-[495px] shrink-0 flex-col bg-[linear-gradient(#4c4c4c,#000)] text-[12px] leading-none text-[#eee]">
      <div className="flex h-[21px] items-center">
        <svg width="30" height="21" className="shrink-0"><circle cx="15.500" cy="11" r="6.500" fill="#9bb89b" opacity="0.500" /><circle cx="15.500" cy="11" r="4.800" fill="#12d812" /><circle cx="15.500" cy="11" r="2.200" fill="#b8ffb8" /></svg>
        <span className="w-[38px] text-[18px] font-medium tracking-[0.300px] text-[#d2e6ff]">.00</span>
        <svg width="390" height="21">
          {Array.from({ length: 20 }, (_, i) => (
            <circle key={i} cx={6.500 + i * 19} cy={i > 11 && i < 15 ? 10 : 10.500} r="4.600" fill={i < 12 ? "#117011" : i < 15 ? "#7f7a0e" : "#87440c"} stroke={i > 11 && i < 15 ? "#6b671c" : "#444c55"} strokeWidth="1.300" />
          ))}
        </svg>
      </div>
      <div className="flex gap-[5px] pl-[6px] font-['Lato'] text-[9.500px] font-black tracking-[0.400px] text-[#d2e6ff]">
        <div className="flex h-[17px] w-[76px] items-center justify-center rounded-t-[6px] bg-[linear-gradient(#000,#003b78)]">Limiter</div>
        <div className="flex h-[17px] w-[76px] items-center justify-center rounded-t-[6px] border-2 border-b-0 border-[#3c3c3c] bg-[#4e4e4e] text-[#c8dcf4]">Meter</div>
      </div>
      <div className="mt-px">
        {PARAMS.map(([name, pos, val, unit]) => (
          <div key={name} className="flex h-[16px] items-center pl-[5px]">
            <span className="w-[135px] pt-px">{name}</span>
            <svg width="277" height="16" className="overflow-visible">
              <path d="M2.500 6.500H270" stroke="#555" strokeWidth="5" strokeLinecap="round" /><path d="M2.500 6.500H270" stroke="#858585" strokeWidth="2" strokeLinecap="round" />
              <path transform={`translate(${pos + 1} 0)`} d="M0.500 1.500H9.500L5 14Z" fill="url(#thumb)" stroke="#1e4268" strokeWidth="0.800" />
            </svg>
            <span className="flex h-[16px] w-[55px] items-center bg-white text-[12.500px] text-[#111]">{val}</span>
            <span className="flex-1 pr-[3px] pt-px text-right">{unit}</span>
          </div>
        ))}
      </div>
      <div className="mb-[8px] mt-auto flex h-[16px] items-center pl-[17px]">
        <i className="h-[14px] w-[14px] rounded-[3px] bg-[linear-gradient(#fff,#ddd)]" />
        <span className="ml-[6px] w-[70px] pt-px tracking-[0.200px]">Bypass</span>
        <span className="w-[87px] tracking-[0.100px]">Bypass Gain:</span>
        <svg width="215" height="16"><path d="M5 6H204" stroke="#5a5a5a" strokeWidth="4" strokeLinecap="round" />{Array.from({ length: 9 }, (_, i) => <path key={i} d={`M${4.500 + i * 25} 6V${i % 4 === 0 ? 15 : 10}`} stroke="#d0d0d0" />)}<path d="M99.500 1.500H108.500L104 13Z" fill="url(#thumb)" stroke="#456" strokeWidth="0.800" /></svg>
        <span className="flex h-[15px] w-[55px] items-center bg-white text-[12.500px] text-[#111]">0</span>
        <span className="ml-[9px] pt-px">dB</span>
      </div>
    </div>
  );
}

const MARKS: [number, string, string][] = [[38, "+12", "#b9d0ec"], [64, "+ 6", "#30c060"], [88, "U", "#3c86c8"], [115, "− 6", "#30c060"], [141, "−12", "#b9d0ec"], [158, "−20", "#b9d0ec"], [179, "−30", "#b9d0ec"], [201, "−40", "#b9d0ec"], [213, "−70", "#b9d0ec"], [222, "−∞", "#b9d0ec"]];

function MasterFader() {
  return (
    <svg className="ml-[3px] block shrink-0 bg-[linear-gradient(90deg,#525252,#000_95%)] font-['DejaVu_Sans'] text-[8px]" width="104" height="244">
      <rect x="10.500" y="10.500" width="83" height="4" fill="#222" stroke="#d2e6ff" /><path d="M52.500 11V14" stroke="#49f" />
      <path d="M51.500 16L56 28H47Z" fill="url(#thumbUp)" />
      {MARKS.map(([y, t, c]) => <text key={t} x={t === "U" ? 37 : 43} y={y} textAnchor={t === "U" ? "middle" : "end"} fill={c}>{t}</text>)}
      <rect x="47.500" y="35.500" width="8" height="184" fill="#1c1c1c" stroke="#d2e6ff" /><path d="M47 219.500H56" stroke="#2fe060" />
      <path d="M60 84L72 79V89Z" fill="url(#thumbUp)" />
      <path d="M45 238.500H51M53 238.500H59" stroke="#8296ac" strokeWidth="2" />
    </svg>
  );
}

export default function App() {
  return (
    <div className="flex h-[785px] w-[1387px] flex-col overflow-hidden bg-white font-['Noto_Sans',sans-serif]">
      <Defs />
      <div className="flex h-[21px] shrink-0 items-center bg-[linear-gradient(#dcdcdc,#a8a8a8)]">
        <div className="flex w-[602px] gap-[7px] pl-[8px]">
          <i className="h-[14px] w-[14px] rounded-full border border-[#8a3a36] bg-[radial-gradient(circle_at_50%_80%,#ffc4bd,#ee3d38_60%,#a61d1a)]" />
          <i className="h-[14px] w-[14px] rounded-full border border-[#9a6a2a] bg-[radial-gradient(circle_at_50%_80%,#ffec9c,#f5a431_60%,#b86a14)]" />
          <i className="h-[14px] w-[14px] rounded-full border border-[#4c7a3a] bg-[radial-gradient(circle_at_50%_80%,#dcffb0,#7cbf4e_60%,#417a22)]" />
        </div>
        <span className="whitespace-nowrap pt-[3px] text-[12.500px] leading-none tracking-[0.350px] text-[#1a1a1a]">Edit Window: Different Story*</span>
      </div>
      <TopPanel />
      <Overview />
      <div className="flex h-[282px] shrink-0">
        <TrackControls />
        <Arrangement />
        <VScroll thumb="h-[43px] w-[13px] shrink-0" className="mt-[28px] w-[14px]" />
        <RegionBin />
      </div>
      <StatusBar />
      <StripToolbar />
      <div className="flex h-[244px] shrink-0">
        <div className="w-[15px] shrink-0 bg-[linear-gradient(#f0f0f0,#d4d4d4)]" />
        <div className="flex bg-[linear-gradient(#4c4c4c,#000)]">
          <Equaliser />
          <Filter />
        </div>
        <MeterStrip className="w-[23px]" />
        <Limiter />
        <MeterStrip className="w-[23px]" />
        <div className="bg-black"><MasterFader /></div>
        <MeterStrip className="w-[23px]" />
      </div>
      <div className="flex h-[15px] shrink-0 bg-[linear-gradient(#c9c9c9,#fff_40%,#f2f2f2)] pl-[15px]">
        <i className="h-[14px] w-[6px] rounded-r bg-[#eee] shadow-[2px_0_3px_#999]" />
        <i className="ml-[513px] h-[14px] w-[819px] rounded-full border border-[#2c5bb0] bg-[linear-gradient(#a9c4ec,#86b4ea_35%,#4d98e6_50%,#a8e2fd)]" />
        <span className="flex w-[17px] items-center justify-center"><ScrollArrow dir="left" /></span>
        <span className="flex w-[17px] items-center justify-center border-l border-[#bbb]"><ScrollArrow dir="right" /></span>
      </div>
    </div>
  );
}
